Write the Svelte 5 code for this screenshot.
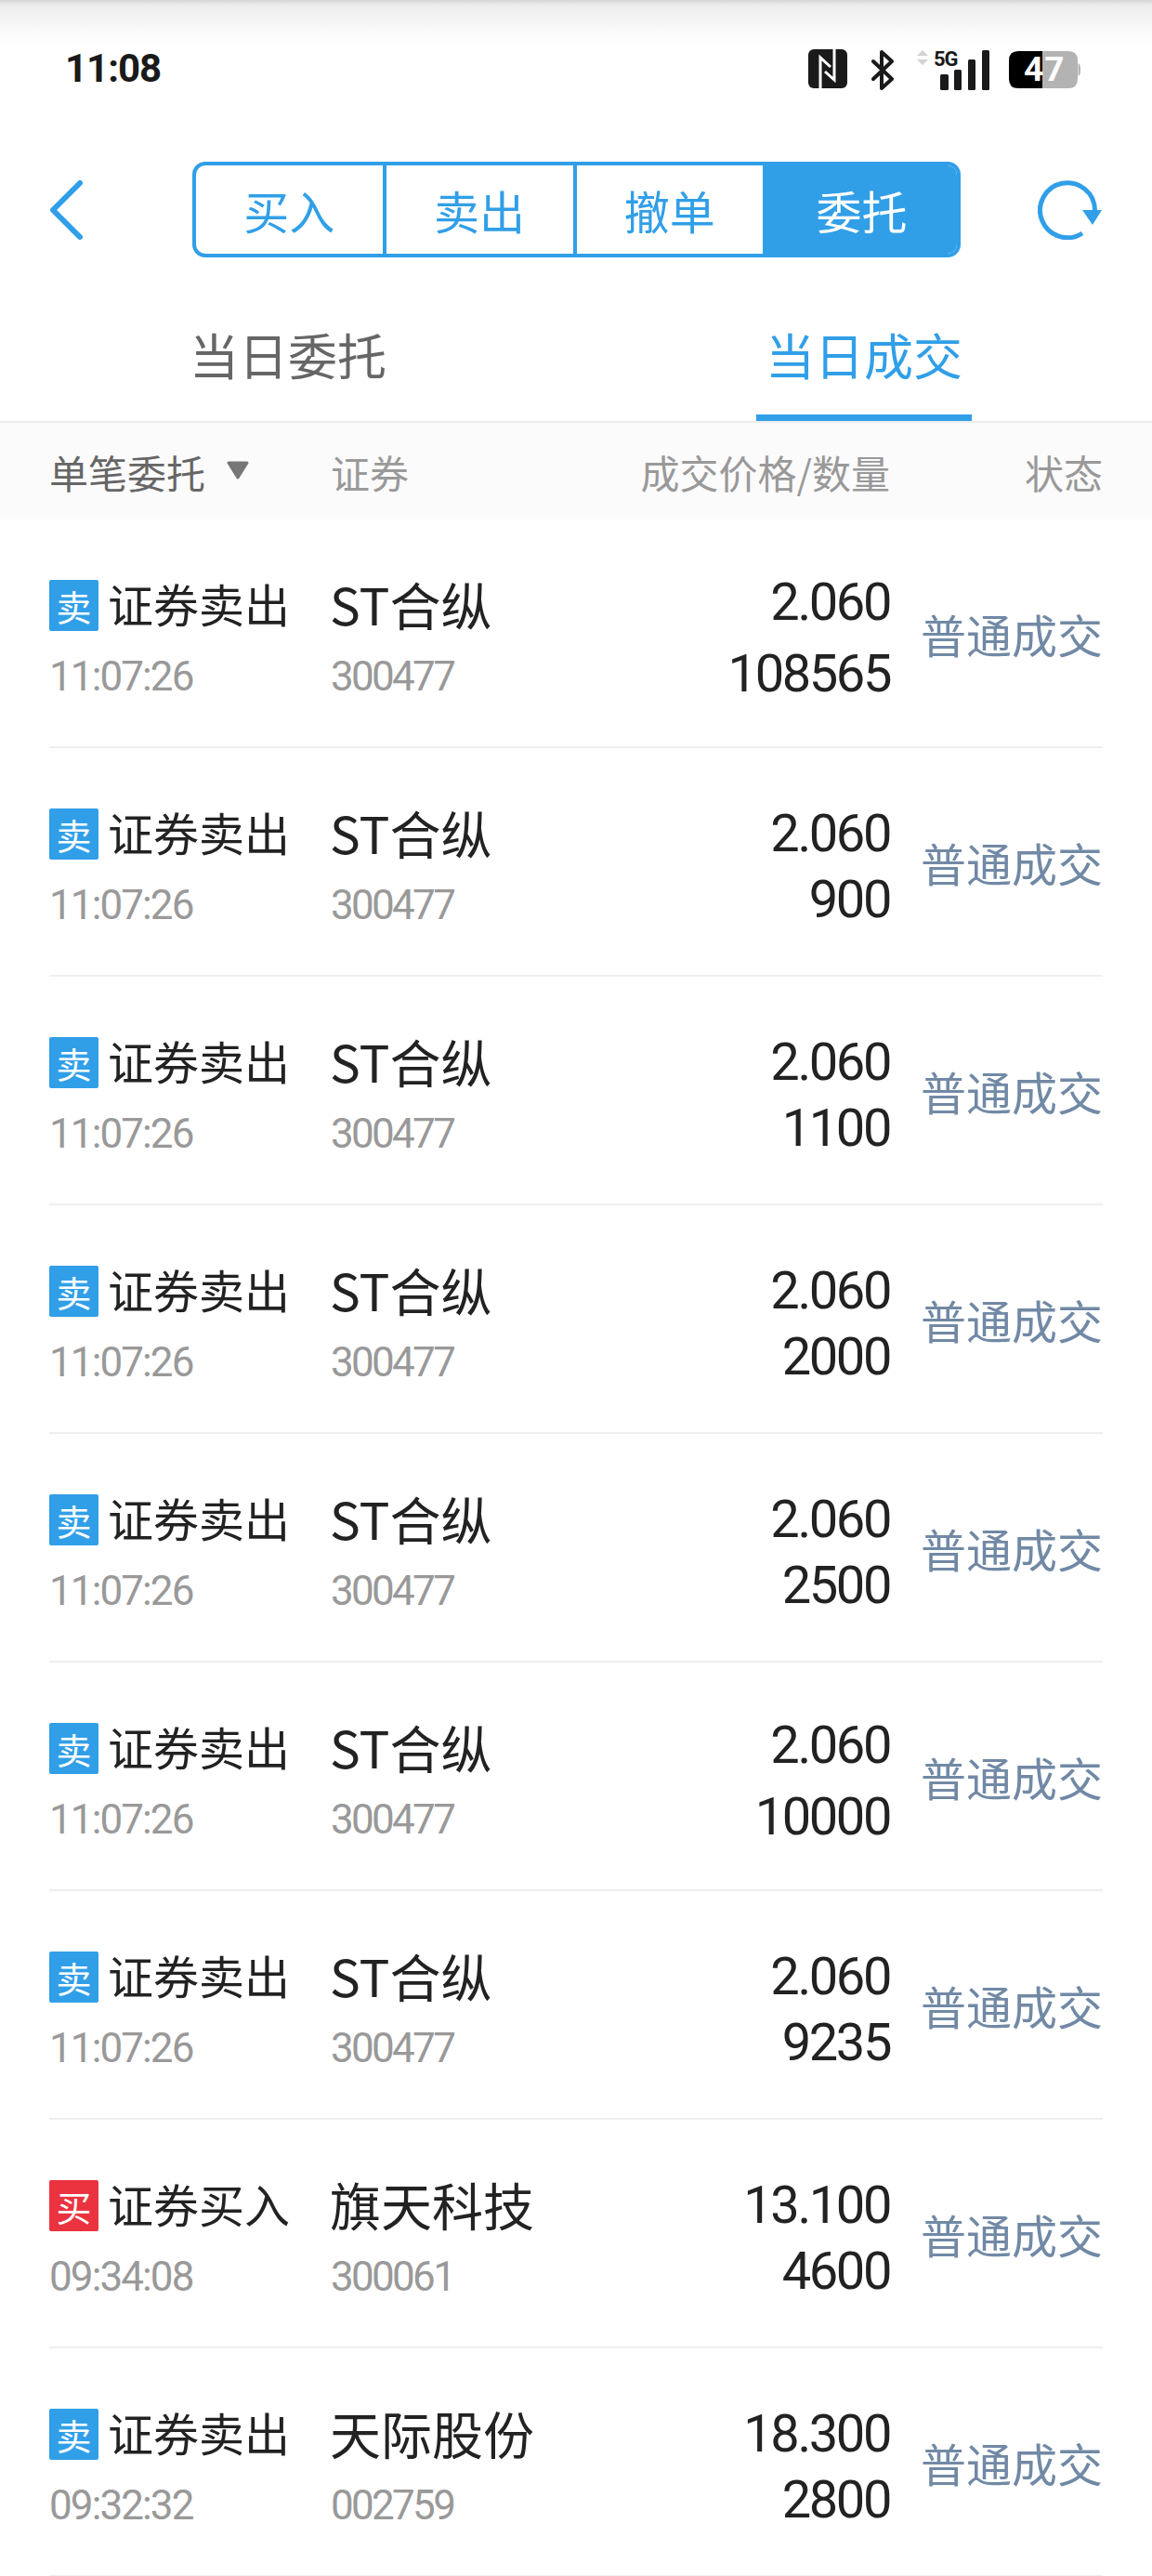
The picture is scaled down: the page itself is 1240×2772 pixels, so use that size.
<script>
  const tabs = ["买入", "卖出", "撤单", "委托"];

  const st = { side: "卖", action: "证券卖出", name: "ST合纵", code: "300477", time: "11:07:26", price: "2.060" };
  const trades = [
    { ...st, qty: "108565" },
    { ...st, qty: "900" },
    { ...st, qty: "1100" },
    { ...st, qty: "2000" },
    { ...st, qty: "2500" },
    { ...st, qty: "10000" },
    { ...st, qty: "9235" },
    { side: "买", action: "证券买入", name: "旗天科技", code: "300061", time: "09:34:08", price: "13.100", qty: "4600" },
    { side: "卖", action: "证券卖出", name: "天际股份", code: "002759", time: "09:32:32", price: "18.300", qty: "2800" },
  ];
</script>

<div class="page">
  <div class="statusbar">
    <span class="clock">11:08</span>
    <div class="status-icons">
      <svg class="nfc" width="42" height="42" viewBox="0 0 42 42">
        <rect width="42" height="42" rx="6" fill="#1a1a1a" />
        <path d="M13 42V9L24 19M28 0V33L18 24" fill="none" stroke="#fff" stroke-width="3" />
      </svg>
      <svg class="bt" width="24" height="44" viewBox="0 0 24 44">
        <path d="M2 13L22 32L11 42V3L22 13L2 32" fill="none" stroke="#1a1a1a" stroke-width="4" stroke-linejoin="round" stroke-linecap="round" />
      </svg>
      <div class="signal">
        <svg width="78" height="44" viewBox="0 0 78 44">
          <path d="M6 1L12 7H0ZM0 11H12L6 17Z" fill="#d2d2d2" />
          <rect x="25" y="27" width="9" height="17" rx="1.5" fill="#1a1a1a" />
          <rect x="40" y="22" width="8" height="22" rx="1.5" fill="#1a1a1a" />
          <rect x="55" y="11" width="8" height="33" rx="1.5" fill="#1a1a1a" />
          <rect x="70" y="1" width="8" height="43" rx="1.5" fill="#1a1a1a" />
        </svg>
        <span class="fiveg">5G</span>
      </div>
      <div class="battery">
        <svg width="77" height="40" viewBox="0 0 77 40">
          <path d="M36 0H64Q74 0 74 10V30Q74 40 64 40H36Z" fill="#b3b3b3" />
          <path d="M74.5 13Q77 14 77 20Q77 26 74.5 27Z" fill="#b3b3b3" />
          <path d="M36 0H10Q0 0 0 10V30Q0 40 10 40H36Z" fill="#000" />
        </svg>
        <span class="level">47</span>
      </div>
    </div>
  </div>

  <div class="toolbar">
    <svg class="back" width="36" height="64" viewBox="0 0 36 64">
      <path d="M33 3L4 32L33 61" fill="none" stroke="#319fe8" stroke-width="6" stroke-linecap="round" stroke-linejoin="round" />
    </svg>
    <div class="segments">
      {#each tabs as tab, i}
        <div class="segment" class:active={i === 3}>{tab}</div>
      {/each}
    </div>
    <svg class="refresh" width="70" height="64" viewBox="0 0 70 64">
      <path d="M61.5 32A29.5 29.5 0 1 0 48 57" fill="none" stroke="#319fe8" stroke-width="5" />
      <path d="M48 32H69L59 48Z" fill="#319fe8" />
    </svg>
  </div>

  <div class="tabs">
    <div class="tab">当日委托</div>
    <div class="tab current">当日成交</div>
  </div>

  <div class="table-head">
    <div class="filter">单笔委托
      <svg class="caret" width="26" height="20" viewBox="0 0 26 20">
        <path d="M3 2H23L13 18Z" fill="#777" stroke="#777" stroke-width="3" stroke-linejoin="round" />
      </svg>
    </div>
    <div>证券</div>
    <div class="right">成交价格/数量</div>
    <div class="right">状态</div>
  </div>

  <div class="rows">
    {#each trades as t}
      <div class="row">
        <div class="cell">
          <div class="action">
            <span class="badge" class:buy={t.side === "买"}>{t.side}</span>{t.action}
          </div>
          <div class="sub">{t.time}</div>
        </div>
        <div class="cell">
          <div class="name">{t.name}</div>
          <div class="sub code">{t.code}</div>
        </div>
        <div class="cell nums" class:long={t.qty.length > 4}>
          <div>{t.price}</div>
          <div>{t.qty}</div>
        </div>
        <div class="state">普通成交</div>
      </div>
    {/each}
  </div>
</div>

<style>
  :global(body) {
    margin: 0;
    background: #fff;
  }

  .page {
    width: 1240px;
    height: 2772px;
    overflow: hidden;
    font-family: "Noto Sans CJK SC", sans-serif;
    background: #fff;
  }

  .statusbar {
    height: 174px;
    box-sizing: border-box;
    padding: 53px 77px 0 70px;
    display: flex;
    justify-content: space-between;
    align-items: flex-start;
    background: linear-gradient(#d4d4d4 0, #ececec 5px, #f8f8f8 30px, #fff 48px);
  }

  .clock {
    font-family: Roboto, sans-serif;
    font-weight: 700;
    font-size: 42px;
    line-height: 42px;
    letter-spacing: -1px;
    color: #1a1a1a;
  }

  .status-icons {
    display: flex;
    align-items: flex-start;
  }

  .bt {
    margin-left: 26px;
  }

  .signal {
    position: relative;
    margin-left: 25px;
    height: 44px;
  }

  .battery {
    position: relative;
    margin: 2px 0 0 21px;
    height: 40px;
  }

  .fiveg {
    position: absolute;
    left: 18px;
    top: 0;
    font-family: Roboto, sans-serif;
    font-weight: 700;
    font-size: 22px;
    line-height: 22px;
    letter-spacing: -1px;
    color: #1a1a1a;
  }

  .level {
    position: absolute;
    left: 16px;
    top: 0;
    font-family: Roboto, sans-serif;
    font-weight: 700;
    font-size: 37px;
    line-height: 40px;
    letter-spacing: 1px;
    color: #fff;
  }

  .toolbar {
    height: 103px;
    padding: 0 53px;
    display: flex;
    align-items: center;
  }

  .segments {
    width: 827px;
    height: 103px;
    margin: 0 83px 0 118px;
    flex-shrink: 0;
    box-sizing: border-box;
    display: grid;
    grid-template-columns: repeat(4, 1fr);
    border: 4px solid #319fe8;
    border-radius: 14px;
    overflow: hidden;
  }

  .segment {
    display: flex;
    align-items: center;
    justify-content: center;
    font-size: 49px;
    color: #319fe8;
    border-right: 4px solid #319fe8;
  }

  .segment:last-child {
    border-right: none;
  }

  .segment.active {
    background: #319fe8;
    color: #fff;
  }

  .tabs {
    height: 176px;
    display: grid;
    grid-template-columns: 1fr 1fr;
    border-bottom: 2px solid #ececec;
  }

  .tab {
    position: relative;
    text-align: center;
    padding-top: 66px;
    font-size: 53px;
    line-height: 76px;
    color: #666;
  }

  .tab.current {
    color: #319fe8;
  }

  .tab.current::after {
    content: "";
    position: absolute;
    left: 194px;
    top: 169px;
    width: 232px;
    height: 7px;
    background: #319fe8;
  }

  .table-head {
    height: 104px;
    padding: 0 53px;
    display: grid;
    grid-template-columns: 303px 300px 302px 1fr;
    align-items: center;
    font-size: 42px;
    color: #999;
    background: #fbfbfb;
  }

  .filter {
    display: flex;
    align-items: center;
    color: #666;
  }

  .caret {
    margin: -2px 0 0 22px;
  }

  .right {
    text-align: right;
  }

  .rows {
    padding: 0 53px;
  }

  .row {
    height: 246px;
    box-sizing: border-box;
    display: grid;
    grid-template-columns: 303px 300px 302px 1fr;
    align-items: center;
    border-bottom: 2px solid #efefef;
  }

  .cell {
    display: flex;
    flex-direction: column;
    margin-top: 9px;
  }

  .action {
    display: flex;
    align-items: center;
    font-size: 49px;
    line-height: 56px;
    color: #222;
  }

  .badge {
    width: 53px;
    height: 55px;
    margin: 3px 10px -3px 0;
    display: flex;
    align-items: center;
    justify-content: center;
    font-size: 38px;
    color: #fff;
    background: #319fe8;
    border-radius: 2px;
  }

  .badge.buy {
    background: #eb3340;
  }

  .name {
    font-size: 55px;
    line-height: 56px;
    margin-left: -1px;
    color: #222;
  }

  .sub {
    margin-top: 28px;
    font-family: Roboto, sans-serif;
    font-size: 44px;
    line-height: 46px;
    letter-spacing: -1.9px;
    color: #999;
  }

  .sub.code {
    letter-spacing: -2.7px;
  }

  .nums {
    align-items: flex-end;
    margin-top: 12px;
    font-family: Roboto, sans-serif;
    font-size: 56px;
    line-height: 71px;
    letter-spacing: -2.4px;
    color: #222;
  }

  .nums.long {
    line-height: 77px;
  }

  .state {
    text-align: right;
    font-size: 49px;
    color: #7189a5;
  }
</style>
